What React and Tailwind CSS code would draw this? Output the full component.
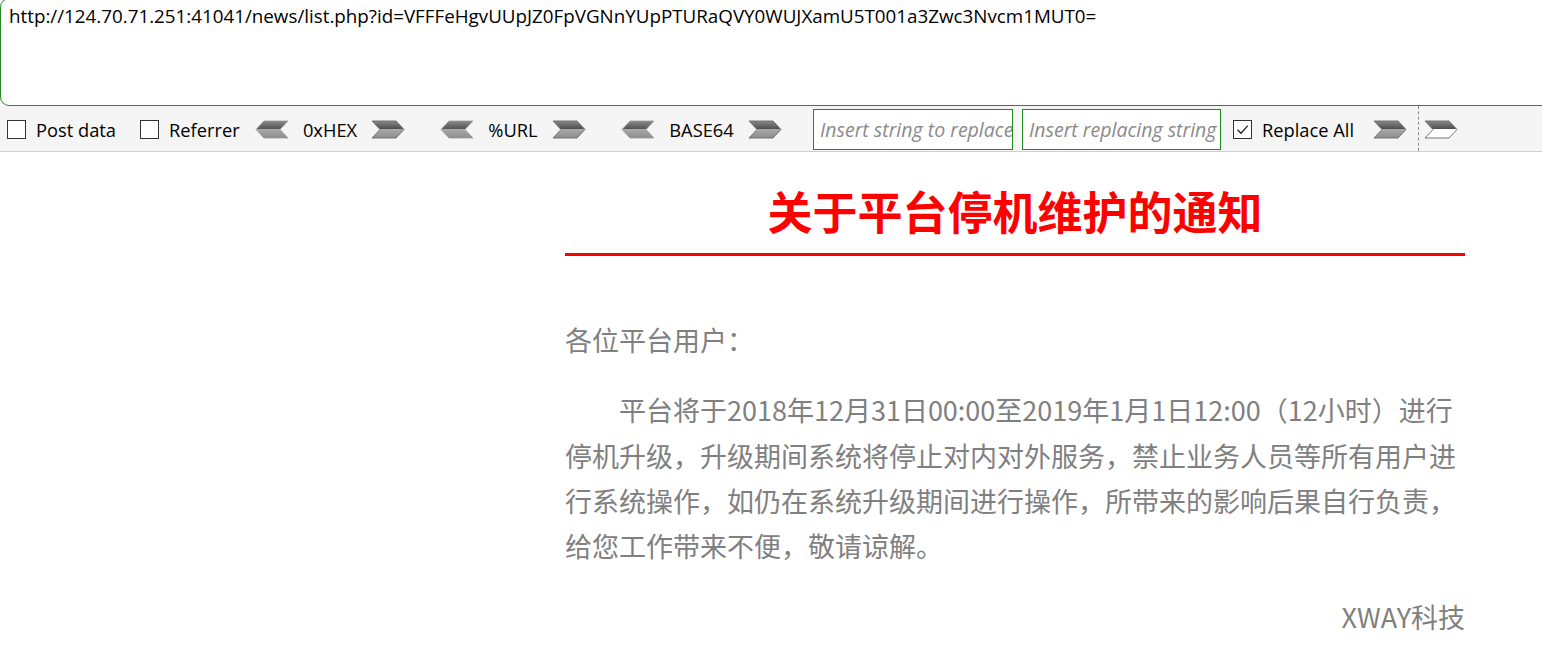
import React from "react";

const ui = { fontFamily: '"Open Sans", "Noto Sans", sans-serif' };
const cjk = { fontFamily: '"Noto Sans CJK SC", "Noto Sans", sans-serif' };

function ArrowL() {
  return (
    <svg width="34" height="19" viewBox="0 0 34 19" className="shrink-0">
      <defs>
        <linearGradient id="gl" x1="0" y1="0" x2="0" y2="1">
          <stop offset="0" stopColor="#8a8a8a" />
          <stop offset="0.45" stopColor="#555" />
          <stop offset="0.5" stopColor="#a8a8a8" />
          <stop offset="1" stopColor="#8d8d8d" />
        </linearGradient>
      </defs>
      <polygon points="1,9.5 9,1 33,1 25,9.5 33,18 9,18" fill="url(#gl)" stroke="#9a9a9a" strokeWidth="0.8" />
    </svg>
  );
}

function ArrowR({ white }) {
  const id = white ? "grw" : "gr";
  return (
    <svg width="34" height="19" viewBox="0 0 34 19" className="shrink-0">
      <defs>
        <linearGradient id={id} x1="0" y1="0" x2="0" y2="1">
          <stop offset="0" stopColor="#8a8a8a" />
          <stop offset="0.45" stopColor="#505050" />
          <stop offset="0.5" stopColor={white ? "#ffffff" : "#a8a8a8"} />
          <stop offset="1" stopColor={white ? "#ffffff" : "#8d8d8d"} />
        </linearGradient>
      </defs>
      <polygon points="1,1 25,1 33,9.5 25,18 1,18 9,9.5" fill={`url(#${id})`} stroke="#6a6a6a" strokeWidth="0.9" />
    </svg>
  );
}

function Check({ checked }) {
  return (
    <div className="w-[19px] h-[19px] shrink-0 border border-[#333] bg-white flex items-center justify-center">
      {checked && (
        <svg width="15" height="15" viewBox="0 0 15 15">
          <path d="M2.5 7.8 L6 11.2 L12.8 3.6" fill="none" stroke="#222" strokeWidth="1.3" />
        </svg>
      )}
    </div>
  );
}

export default function App() {
  return (
    <div className="w-[1542px] h-[656px] overflow-hidden bg-white relative">
      {/* URL box */}
      <div className="w-[1560px] -mt-[2px] border border-[#2a8a2a] rounded-l-[9px] bg-white pl-[8px] pt-[5px] h-[108px]">
        <div className="text-[18.8px] text-black leading-[24px] whitespace-nowrap" style={ui}>
          http://124.70.71.251:41041/news/list.php?id=VFFFeHgvUUpJZ0FpVGNnYUpPTURaQVY0WUJXamU5T001a3Zwc3Nvcm1MUT0=
        </div>
      </div>

      {/* toolbar */}
      <div className="h-[46px] pt-[2px] bg-[#f5f5f5] border-b border-[#cfcfcf] flex items-center pl-[7px] text-[18.3px] text-black" style={ui}>
        <Check />
        <span className="ml-[10px] w-[104px] whitespace-nowrap">Post data</span>
        <Check />
        <span className="ml-[10px] w-[86px] whitespace-nowrap">Referrer</span>
        <ArrowL />
        <span className="w-[82px] text-center">0xHEX</span>
        <ArrowR />
        <div className="w-[35px]" />
        <ArrowL />
        <span className="w-[78px] text-center">%URL</span>
        <ArrowR />
        <div className="w-[35px]" />
        <ArrowL />
        <span className="w-[93px] text-center">BASE64</span>
        <ArrowR />
        <div className="w-[31px]" />
        <div className="w-[200px] h-[41px] border border-[#1f8a1f] bg-white flex items-center pl-[6px] overflow-hidden whitespace-nowrap italic text-[#8a8a8a] text-[19.5px]">
          Insert string to replace
        </div>
        <div className="w-[9px]" />
        <div className="w-[199px] h-[41px] border border-[#1f8a1f] bg-white flex items-center pl-[6px] overflow-hidden whitespace-nowrap italic text-[#8a8a8a] text-[19.5px]">
          Insert replacing string
        </div>
        <div className="w-[12px]" />
        <Check checked />
        <span className="ml-[10px] w-[111px] whitespace-nowrap">Replace All</span>
        <ArrowR />
        <div className="w-[11px]" />
        <div className="self-stretch -mt-[2px] border-l border-dashed border-[#888]" />
        <div className="w-[5px]" />
        <ArrowR white />
      </div>

      {/* content */}
      <div className="ml-[565px] w-[900px]" style={cjk}>
        <h1 className="mt-[32px] text-center text-[45px] leading-[54px] font-bold text-[#ff0000]">
          关于平台停机维护的通知
        </h1>
        <div className="mt-[15px] h-[3px] bg-[#ff0000]" />
        <div className="mt-[61px] text-[27px] leading-[45.3px] text-[#808080]">
          <p>各位平台用户：</p>
          <p className="mt-[25px] indent-[54px]">
            平台将于2018年12月31日00:00至2019年1月1日12:00（12小时）进行停机升级，升级期间系统将停止对内对外服务，禁止业务人员等所有用户进行系统操作，如仍在系统升级期间进行操作，所带来的影响后果自行负责，给您工作带来不便，敬请谅解。
          </p>
          <p className="mt-[26px] text-right">XWAY科技</p>
        </div>
      </div>
    </div>
  );
}
